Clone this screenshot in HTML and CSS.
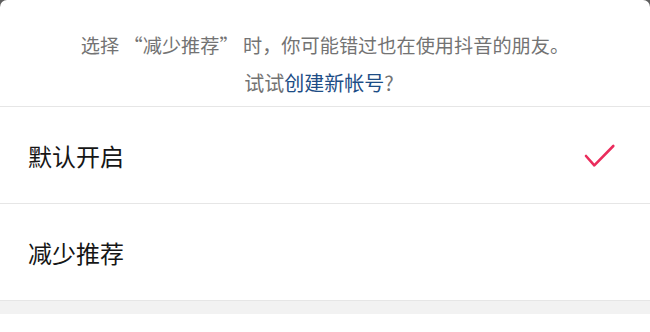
FILE: index.html
```html
<!DOCTYPE html>
<html lang="zh-CN">
<head>
<meta charset="utf-8">
<link rel="stylesheet" href="styles.css">
</head>
<body>
<div class="sheet">
  <div class="header">
    <p class="line1">选择 “减少推荐” 时，你可能错过也在使用抖音的朋友。</p>
    <p class="line2">试试<span class="link">创建新帐号</span>?</p>
  </div>
  <div class="row">
    <span class="label">默认开启</span>
    <svg class="check" width="36" height="26" viewBox="0 0 36 26"><polyline points="6,14 14.3,23.3 33.3,4" fill="none" stroke="#ea2c5c" stroke-width="2.6" stroke-linecap="round" stroke-linejoin="round"/></svg>
  </div>
  <div class="row">
    <span class="label">减少推荐</span>
  </div>
  <div class="band"></div>
</div>
</body>
</html>
```
FILE: styles.css
```css
html, body {
  margin: 0;
  padding: 0;
  background: #5e5e5e;
}
body {
  width: 650px;
  height: 332px;
  overflow: hidden;
  font-family: "Noto Sans CJK SC", "Noto Sans", sans-serif;
}
.sheet {
  background: #fff;
  border-radius: 7px 7px 0 0;
  height: 332px;
}
.header {
  height: 107px;
  box-sizing: border-box;
  padding-top: 26px;
  border-bottom: 1px solid #e6e6e6;
  text-align: center;
}
.header p {
  margin: 0;
  line-height: 38px;
}
.line1 {
  font-size: 19.2px;
  color: #737373;
}
.line2 {
  font-size: 20px;
  color: #737373;
  padding-right: 12px;
}
.link {
  color: #1d4d86;
}
.row {
  height: 96px;
  border-bottom: 1px solid #e6e6e6;
  display: flex;
  align-items: center;
  justify-content: space-between;
  padding: 0 34px 0 28px;
}
.row:last-of-type {
  border-bottom: none;
  height: 97px;
}
.label {
  font-size: 24px;
  color: #161616;
}
.check {
  display: block;
}
.band {
  height: 13px;
  background: #f2f2f2;
}
```
